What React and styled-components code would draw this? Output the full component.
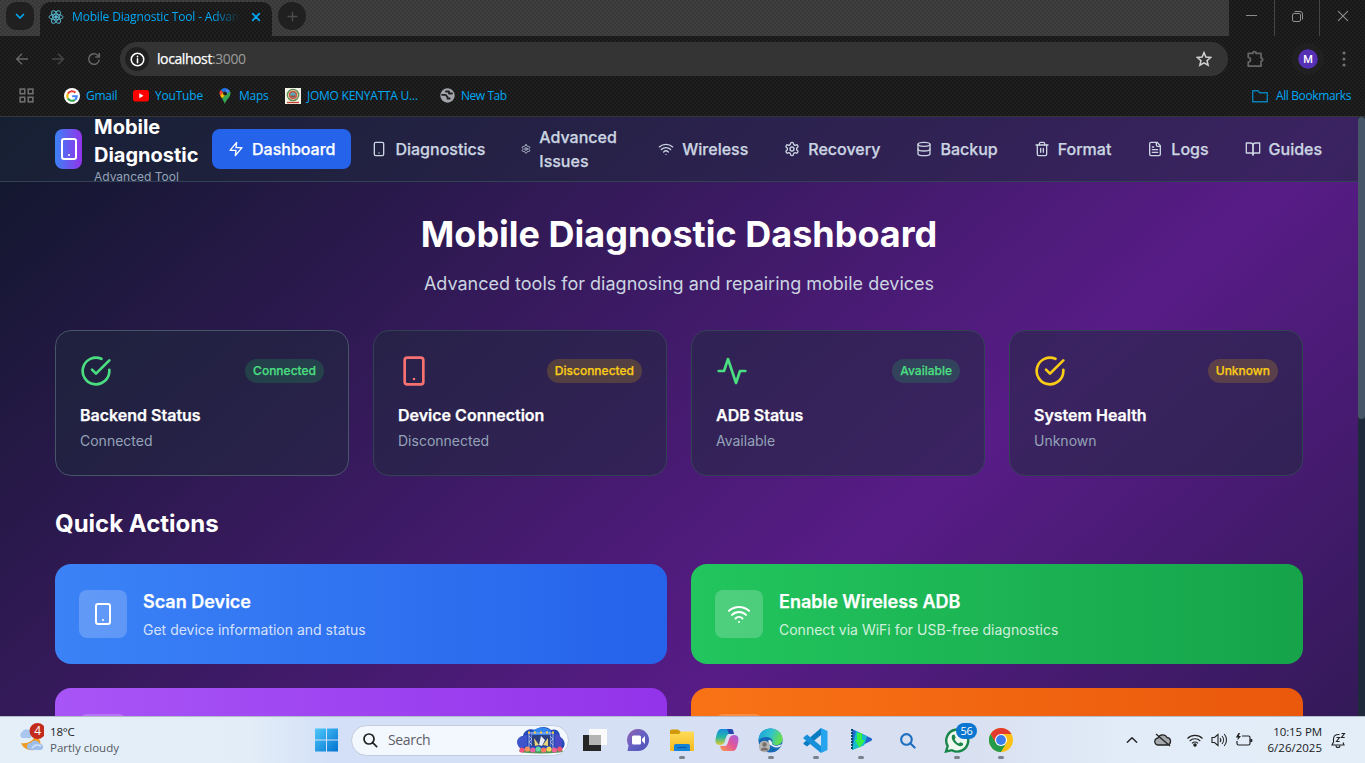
import React from "react";
import styled, { createGlobalStyle, css } from "styled-components";

const GlobalStyle = createGlobalStyle`
  * { box-sizing: border-box; margin: 0; }
  body { margin: 0; overflow: hidden; background: #1f1f1f; }
  svg { display: block; flex-shrink: 0; }
`;

const uiFont = `"Open Sans", "Noto Sans", sans-serif`;
const dots = css`
  background-image: radial-gradient(circle at 1px 1px, ${(p) => p.$dot || "#151515"} 0.6px, transparent 1.1px),
    radial-gradient(circle at 3px 3px, ${(p) => p.$dot || "#151515"} 0.6px, transparent 1.1px);
  background-size: 4px 4px;
`;
const sturdy = css`
  -webkit-text-stroke: 0.25px currentColor;
`;

const Screen = styled.div`
  width: 1365px;
  height: 763px;
  display: flex;
  flex-direction: column;
  overflow: hidden;
  font-family: ${uiFont};
`;

/* ---------- browser chrome ---------- */
const Chrome = styled.div`
  height: 117px;
  flex-shrink: 0;
  background-color: #202020;
  ${dots}
  border-bottom: 1px solid #353535;
  display: flex;
  flex-direction: column;
`;
const TabStrip = styled.div`
  height: 36px;
  display: flex;
`;
const TabArea = styled.div`
  width: 1229px;
  height: 36px;
  display: flex;
  background-color: #404040;
  ${dots}
`;
const TabLead = styled.div`
  width: 40px;
  padding: 2px 0 0 6px;
`;
const TabSearch = styled.div`
  width: 28px;
  height: 28px;
  border-radius: 10px;
  background: #202020;
  display: grid;
  place-items: center;
`;
const Tab = styled.div`
  width: 232px;
  height: 34px;
  margin-top: 2px;
  border-radius: 10px 10px 0 0;
  background-color: #202020;
  ${dots}
  display: flex;
  align-items: center;
  padding: 0 11px 5px 8px;
`;
const TabTitle = styled.div`
  width: 168px;
  margin-left: 8px;
  overflow: hidden;
  white-space: nowrap;
  font-size: 12px;
  letter-spacing: -0.16px;
  color: #00a8f4;
  mask-image: linear-gradient(to right, #000 140px, transparent 168px);
`;
const TabClose = styled.div`
  margin-left: auto;
`;
const NewTab = styled.div`
  width: 28px;
  height: 28px;
  margin: 2px 0 0 6px;
  border-radius: 50%;
  background: #202020;
  display: grid;
  place-items: center;
`;
const WindowButton = styled.div`
  flex: 1;
  display: grid;
  place-items: center;
  padding-bottom: 4px;
  & + & { border-left: 1px solid #454545; }
`;
const Toolbar = styled.div`
  height: 46px;
  display: flex;
  align-items: center;
  padding-left: 14px;
`;
const ToolIcon = styled.div`
  width: ${(p) => p.$w}px;
  display: flex;
  justify-content: ${(p) => p.$align || "flex-start"};
`;
const Omnibox = styled.div`
  width: 1108px;
  height: 34px;
  border-radius: 17px;
  background: #343434;
  display: flex;
  align-items: center;
  padding: 0 16px 0 5px;
  font-size: 14px;
  letter-spacing: -0.41px;
  color: #9c9c9c;
  & b { font-weight: 400; color: #fff; ${sturdy} }
`;
const Address = styled.span`
  padding-bottom: 1px;
`;
const InfoDisc = styled.div`
  width: 24px;
  height: 24px;
  border-radius: 50%;
  background: #202020;
  display: grid;
  place-items: center;
  margin-right: 8px;
`;
const StarSlot = styled.div`
  margin-left: auto;
`;
const Avatar = styled.div`
  width: 20px;
  height: 20px;
  border-radius: 50%;
  background: #5530b5;
  outline: 6px solid #202020;
  color: #fff;
  font: 500 11px/21px Roboto, sans-serif;
  text-align: center;
`;
const Bookmarks = styled.div`
  height: 28px;
  display: flex;
  align-items: center;
  padding: 0 14px 1px 18px;
`;
const Bookmark = styled.div`
  display: flex;
  align-items: center;
  gap: ${(p) => p.$gap || 6}px;
  width: ${(p) => (p.$w ? p.$w + "px" : "auto")};
  margin-left: ${(p) => p.$ml || 0};
  white-space: nowrap;
  font-size: 12px;
  line-height: 16px;
  letter-spacing: ${(p) => p.$track || "-0.25px"};
  color: #00a8f4;
`;

/* ---------- web page ---------- */
const Viewport = styled.div`
  height: 599px;
  flex-shrink: 0;
  display: flex;
  overflow: hidden;
  font-family: Inter, sans-serif;
`;
const Page = styled.div`
  width: 1358px;
  height: 1188px;
  background: linear-gradient(to bottom right, #0f172a, #581c87, #0f172a);
  color: #fff;
`;
const ScrollTrack = styled.div`
  width: 7px;
  height: 599px;
  background: #1e293b;
`;
const ScrollThumb = styled.div`
  height: 302px;
  border-radius: 4px;
  background: #475569;
`;
const NavBar = styled.nav`
  height: 65px;
  overflow: hidden;
  background: rgba(30, 41, 59, 0.5);
  border-bottom: 1px solid #334155;
  padding-left: 55px;
  display: flex;
  align-items: center;
`;
const Brand = styled.div`
  width: 157px;
  display: flex;
  align-items: center;
  gap: 12px;
`;
const BrandMark = styled.div`
  width: 27px;
  height: 40px;
  border-radius: 8px;
  background: linear-gradient(to right, #3b82f6, #9333ea);
  display: grid;
  place-items: center;
`;
const BrandName = styled.div`
  font-size: 20px;
  line-height: 28px;
  font-weight: 700;
  width: 110px;
`;
const BrandSub = styled.div`
  font-size: 12px;
  line-height: 16px;
  color: #94a3b8;
`;
const NavItems = styled.div`
  display: flex;
  align-items: center;
  gap: 4px;
`;
const NavItem = styled.div`
  display: flex;
  align-items: center;
  gap: 8px;
  padding: 8px 16px;
  border-radius: 8px;
  font-size: 16px;
  line-height: 24px;
  font-weight: 500;
  ${sturdy}
  width: ${(p) => (p.$w ? p.$w + "px" : "auto")};
  color: ${(p) => (p.$active ? "#fff" : "#cbd5e1")};
  background: ${(p) => (p.$active ? "#2563eb" : "transparent")};
`;
const Main = styled.main`
  width: 1248px;
  margin: 0 auto;
  padding-top: 32px;
`;
const Title = styled.h1`
  font-size: 36px;
  line-height: 40px;
  font-weight: 700;
  text-align: center;
`;
const Subtitle = styled.p`
  margin-top: 16px;
  font-size: 18px;
  line-height: 28px;
  text-align: center;
  color: #cbd5e1;
`;
const StatusGrid = styled.div`
  display: grid;
  grid-template-columns: repeat(4, 1fr);
  gap: 24px;
  margin-top: 32px;
`;
const StatusCard = styled.div`
  height: 146px;
  border: 1px solid ${(p) => (p.$lit ? "#475569" : "#334155")};
  border-radius: 16px;
  background: rgba(30, 41, 59, 0.5);
  background-clip: padding-box;
  padding: 24px;
`;
const StatusTop = styled.div`
  display: flex;
  align-items: center;
  justify-content: space-between;
  color: ${(p) => p.$color};
`;
const Badge = styled.span`
  padding: 4px 8px;
  border-radius: 12px;
  font-size: 12px;
  line-height: 16px;
  font-weight: 500;
  ${sturdy}
  color: ${(p) => (p.$ok ? "#4ade80" : "#facc15")};
  background: ${(p) => (p.$ok ? "rgba(34,197,94,.2)" : "rgba(234,179,8,.2)")};
`;
const StatusName = styled.h3`
  margin-top: 16px;
  font-size: 16px;
  line-height: 24px;
  font-weight: 600;
  ${sturdy}
`;
const StatusText = styled.p`
  margin-top: 4px;
  font-size: 14px;
  line-height: 20px;
  color: #94a3b8;
`;
const SectionTitle = styled.h2`
  margin-top: 32px;
  font-size: 24px;
  line-height: 32px;
  font-weight: 700;
`;
const ActionGrid = styled.div`
  display: grid;
  grid-template-columns: 1fr 1fr;
  gap: 24px;
  margin-top: 24px;
`;
const ActionCard = styled.div`
  height: 100px;
  border-radius: 16px;
  padding: 24px;
  display: flex;
  align-items: center;
  gap: 16px;
  background: linear-gradient(to right, ${(p) => p.$from}, ${(p) => p.$to});
`;
const ActionIcon = styled.div`
  width: 48px;
  height: 48px;
  border-radius: 8px;
  background: rgba(255, 255, 255, 0.2);
  display: grid;
  place-items: center;
`;
const ActionName = styled.h3`
  font-size: 18px;
  line-height: 28px;
  font-weight: 600;
  ${sturdy}
`;
const ActionText = styled.p`
  margin-top: 4px;
  font-size: 14px;
  line-height: 20px;
  color: rgba(255, 255, 255, 0.8);
`;

/* ---------- taskbar ---------- */
const Taskbar = styled.div`
  height: 47px;
  flex-shrink: 0;
  display: flex;
  align-items: center;
  border-top: 1px solid #b5bccb;
  background: linear-gradient(to right, #e4eff8 0, #e3edf8 250px, #d3e0f7 330px, #d6e0f5 640px, #d8dff0 950px, #e1ecf8 1120px, #e3eef9 100%);
  color: #1b1b1b;
`;
const Weather = styled.div`
  width: 309px;
  padding-left: 18px;
  display: flex;
  align-items: center;
  gap: 6px;
  font-size: 11.5px;
  line-height: 16px;
  letter-spacing: -0.2px;
  & svg { margin-top: -4px; }
  & p:last-child { color: #555b62; letter-spacing: 0; }
`;
const StartSlot = styled.div`
  width: 42px;
  padding-left: 6px;
`;
const SearchBox = styled.div`
  width: 218px;
  height: 31px;
  border-radius: 16px;
  background: #f3f7fe;
  border: 1px solid #c3ccdc;
  display: flex;
  align-items: center;
  justify-content: space-between;
  padding: 0 3px 0 10px;
  color: #5c6067;
  font-size: 14px;
  line-height: 18px;
  letter-spacing: -0.35px;
`;
const SearchLabel = styled.div`
  display: flex;
  align-items: center;
  gap: 10px;
  padding-bottom: 1px;
`;
const AppSlot = styled.div`
  position: relative;
  width: ${(p) => p.$w}px;
  height: 46px;
  display: grid;
  place-items: center;
  padding-bottom: ${(p) => p.$up || 0}px;
  &::after {
    content: "";
    display: ${(p) => (p.$running ? "block" : "none")};
    position: absolute;
    bottom: 4px;
    left: calc(50% - 3px);
    width: 6px;
    height: 3px;
    border-radius: 2px;
    background: #7b818c;
  }
`;
const Apps = styled.div`
  display: flex;
  margin-left: 3px;
`;
const Count = styled.div`
  position: absolute;
  top: 6px;
  right: 7px;
  width: 21px;
  height: 16px;
  border-radius: 8px;
  background: #0a76d0;
  color: #fff;
  font-size: 11px;
  line-height: 16px;
  letter-spacing: -0.3px;
  text-align: center;
`;
const Tray = styled.div`
  margin-left: auto;
  padding-right: 19px;
  display: flex;
  align-items: center;
`;
const TrayIcon = styled.div`
  width: ${(p) => p.$w}px;
  display: flex;
  justify-content: ${(p) => (p.$end ? "flex-end" : "flex-start")};
`;
const Clock = styled.div`
  width: 67px;
  text-align: right;
  font-size: 11.5px;
  line-height: 16px;
  white-space: nowrap;
  & p:first-child { letter-spacing: -0.1px; }
`;

/* ---------- icons ---------- */
const shapes = {
  zap: <polygon points="13 2 3 14 12 14 11 22 21 10 12 10 13 2" />,
  phone: <><rect x="5" y="2" width="14" height="20" rx="2" /><path d="M12 18h.01" /></>,
  gear: <><path d="M12.22 2h-.44a2 2 0 0 0-2 2v.18a2 2 0 0 1-1 1.73l-.43.25a2 2 0 0 1-2 0l-.15-.08a2 2 0 0 0-2.73.73l-.22.38a2 2 0 0 0 .73 2.73l.15.1a2 2 0 0 1 1 1.72v.51a2 2 0 0 1-1 1.74l-.15.09a2 2 0 0 0-.73 2.73l.22.38a2 2 0 0 0 2.73.73l.15-.08a2 2 0 0 1 2 0l.43.25a2 2 0 0 1 1 1.73V20a2 2 0 0 0 2 2h.44a2 2 0 0 0 2-2v-.18a2 2 0 0 1 1-1.73l.43-.25a2 2 0 0 1 2 0l.15.08a2 2 0 0 0 2.73-.73l.22-.39a2 2 0 0 0-.73-2.73l-.15-.08a2 2 0 0 1-1-1.74v-.5a2 2 0 0 1 1-1.74l.15-.09a2 2 0 0 0 .73-2.73l-.22-.38a2 2 0 0 0-2.73-.73l-.15.08a2 2 0 0 1-2 0l-.43-.25a2 2 0 0 1-1-1.73V4a2 2 0 0 0-2-2z" /><circle cx="12" cy="12" r="3" /></>,
  wifi: <><path d="M12 20h.01" /><path d="M2 8.82a15 15 0 0 1 20 0" /><path d="M5 12.859a10 10 0 0 1 14 0" /><path d="M8.5 16.429a5 5 0 0 1 7 0" /></>,
  database: <><ellipse cx="12" cy="5" rx="9" ry="3" /><path d="M3 5V19A9 3 0 0 0 21 19V5" /><path d="M3 12A9 3 0 0 0 21 12" /></>,
  trash: <><path d="M3 6h18" /><path d="M19 6v14c0 1-1 2-2 2H7c-1 0-2-1-2-2V6" /><path d="M8 6V4c0-1 1-2 2-2h4c1 0 2 1 2 2v2" /><path d="M10 11v6M14 11v6" /></>,
  file: <><path d="M15 2H6a2 2 0 0 0-2 2v16a2 2 0 0 0 2 2h12a2 2 0 0 0 2-2V7Z" /><path d="M14 2v4a2 2 0 0 0 2 2h4" /><path d="M10 9H8M16 13H8M16 17H8" /></>,
  book: <><path d="M2 3h6a4 4 0 0 1 4 4v14a3 3 0 0 0-3-3H2z" /><path d="M22 3h-6a4 4 0 0 0-4 4v14a3 3 0 0 1 3-3h7z" /></>,
  check: <><path d="M22 11.08V12a10 10 0 1 1-5.93-9.14" /><path d="m9 11 3 3L22 4" /></>,
  activity: <path d="M22 12h-4l-3 9L9 3l-3 9H2" />,
  back: <path d="M21 12H4M12 4l-8 8 8 8" />,
  forward: <path d="M3 12h17M12 4l8 8-8 8" />,
  reload: <><path d="M20 13a8 8 0 1 1-2.3-6.7L20 8.5" /><path d="M20 3v6h-6" /></>,
  plus: <path d="M12 4v16M4 12h16" />,
  close: <path d="M4 4l16 16M20 4L4 20" />,
  down: <path d="m5 9 7 7 7-7" />,
  up: <path d="m4 16 8-8 8 8" />,
  grid: <><rect x="3" y="3" width="6.5" height="6.5" /><rect x="14.5" y="3" width="6.5" height="6.5" /><rect x="3" y="14.5" width="6.5" height="6.5" /><rect x="14.5" y="14.5" width="6.5" height="6.5" /></>,
  info: <><circle cx="12" cy="12" r="10" /><path d="M12 11v6M12 6.8v.8" /></>,
  star: <path d="m12 2.5 2.8 6.6 7.2.6-5.4 4.7 1.6 7-6.2-3.7-6.2 3.7 1.6-7L2 9.7l7.2-.6z" />,
  puzzle: <path d="M3 4.500h6a2.200 2.200 0 0 1 4.400 0H20v6.200a2.200 2.200 0 0 1 0 4.400V21.500H3v-5.500a3 3 0 0 0 0-6z" />,
  folder: <path d="M1 20.500V4h8l2.500 3H23v13.500z" />,
  search: <><circle cx="10.5" cy="10.5" r="7.5" /><path d="m16 16 6 6" /></>,
};
function Icon({ name, size = 16, stroke = 2, color = "currentColor", join = "round" }) {
  return (
    <svg width={size} height={size} viewBox="0 0 24 24" fill="none" stroke={color} strokeWidth={stroke} strokeLinecap={join === "round" ? "round" : "butt"} strokeLinejoin={join}>
      {shapes[name]}
    </svg>
  );
}

const ReactMark = () => (
  <svg width="16" height="16" viewBox="0 0 24 24" fill="none" stroke="#58b8cf" strokeWidth="1.4">
    <ellipse cx="12" cy="12" rx="10.5" ry="4.2" />
    <ellipse cx="12" cy="12" rx="10.5" ry="4.2" transform="rotate(60 12 12)" />
    <ellipse cx="12" cy="12" rx="10.5" ry="4.2" transform="rotate(120 12 12)" />
    <circle cx="12" cy="12" r="2" fill="#58b8cf" />
  </svg>
);
const GoogleMark = () => (
  <svg width="16" height="16" viewBox="0 0 16 16" fill="none" strokeWidth="2.1">
    <circle cx="8" cy="8" r="8" fill="#fff" />
    <path d="M11.5 4.7A4.8 4.8 0 0 0 3.9 5.6" stroke="#ea4335" />
    <path d="M3.9 5.6a4.800 4.800 0 0 0 0 4.800" stroke="#fbbc05" />
    <path d="M3.9 10.4a4.800 4.800 0 0 0 7 1.400" stroke="#34a853" />
    <path d="M10.9 11.8A4.8 4.8 0 0 0 12.8 8.2H8.2" stroke="#4285f4" />
  </svg>
);
const YouTubeMark = () => (
  <svg width="16" height="12" viewBox="0 0 16 12"><rect width="16" height="11.5" rx="2.8" fill="#f00" /><path d="M6.3 3.3v5L10.5 5.8z" fill="#fff" /></svg>
);
const MapsMark = () => (
  <svg width="12" height="16" viewBox="0 0 12 16">
    <path d="M6 0a5.5 5.500 0 0 0-4.300 2L4.300 4.300 8 .4A6 6 0 0 0 6 0z" fill="#1a73e8" />
    <path d="M1.7 2A5.5 5.5 0 0 0 1.1 7.8L4.3 4.3z" fill="#ea4335" />
    <path d="M8 .4 4.3 4.3 7.8 6.8 11 3.3A5.5 5.5 0 0 0 8 .4z" fill="#4285f4" />
    <path d="M1.1 7.8 3 10.3 7.8 6.8 4.3 4.3z" fill="#fbbc04" />
    <path d="M11 3.3 3 10.3 6 16C6.5 12 11.5 9.5 11.5 5.5Q11.5 4.2 11 3.3z" fill="#34a853" />
    <circle cx="6" cy="5.5" r="2" fill="#202020" />
  </svg>
);
const CrestMark = () => (
  <svg width="16" height="16" viewBox="0 0 16 16">
    <rect width="16" height="16" fill="#f3f3e8" />
    <circle cx="8" cy="7" r="5.7" fill="#d9c9a0" stroke="#5f8c52" strokeWidth="1.3" />
    <circle cx="8" cy="7" r="3.4" fill="#53a9b8" stroke="#d44a3c" strokeWidth="1.3" />
    <path d="M6 7.500h4v1.500H6z" fill="#a64731" /><path d="M2 14.500h12" stroke="#c94334" strokeWidth="1.4" />
  </svg>
);
const GlobeMark = () => (
  <svg width="15" height="15" viewBox="0 0 15 15"><circle cx="7.5" cy="7.5" r="7.2" fill="#a2a6ac" /><path d="M2 6.800h3.500l2 2v1.700h2.200M6 3.500h3v2h3" fill="none" stroke="#202020" strokeWidth="1.8" strokeLinejoin="round" strokeLinecap="round" /></svg>
);
const WeatherMark = () => (
  <svg width="26" height="30" viewBox="0 0 26 30">
    <path d="M3 20c7 1 12-2 14-7 7 2 8 13-1 14-6 1-11-2-13-7z" fill="#f19a25" />
    <path d="M4 15a3.500 3.500 0 0 1 0-6 5 5 0 0 1 9 0v6z" fill="#a9c6ef" />
    <path d="M12 27a3.500 3.500 0 0 1 1-7 5 5 0 0 1 9 1 3 3 0 0 1 0 6z" fill="#9dbdeb" />
    <path d="M14 25c2-3 5-4 9-2" stroke="#d2e3f8" strokeWidth="1.5" fill="none" />
    <circle cx="19.5" cy="8" r="8" fill="#c42b1c" />
    <text x="19.5" y="12.3" fill="#fff" textAnchor="middle" fontFamily="Open Sans" fontSize="12">4</text>
  </svg>
);
const WindowsMark = () => (
  <svg width="24" height="24" viewBox="0 0 24 24">
    <defs><linearGradient id="win" x1="0" y1="0" x2="1" y2="1"><stop stopColor="#4dc8fa" /><stop offset="1" stopColor="#0372d0" /></linearGradient></defs>
    <path d="M0 .5h11v11H0zM12 .5h11v11H12zM0 12.5h11v11H0zM12 12.5h11v11H12z" fill="url(#win)" />
  </svg>
);
const StageArt = () => (
  <svg width="48" height="27" viewBox="0 0 48 27">
    <path d="M4 22C-2 17 0 10 6 9 7 3 13 1 18 3c5-4 12-4 16 0 6-2 9 2 9 7 6 3 6 10 1 13z" fill="#2449b8" />
    <path d="M16 4c6-5 14-4 18 0l-4 8H16z" fill="#3186ef" /><path d="M6 9c-6 1-8 7-3 12l7-2V8z" fill="#3f55cc" />
    <path d="M38 7c6 0 9 7 6 13h-6z" fill="#4a49c5" />
    <path d="M11 6h26M12 5v16M15 5v14M33 5v14M36 5v16M12 9l3 3-3 3 3 3M33 9l3 3-3 3 3 3" stroke="#b3bde1" strokeWidth=".9" fill="none" />
    <path d="M15 8h18v11H15z" fill="#2b407f" />
    <path d="m17 11 5 7-4 1zM31 11l-5 7 5 1z" fill="#ead779" /><path d="m22 18 2-9 4 4-3 6z" fill="#e9edf5" />
    <path d="M11 5.500h2M17 5.500h2M23 5.500h2M29 5.500h2M35 5.500h2" stroke="#ffc843" strokeWidth="2" />
    <ellipse cx="24" cy="24" rx="22" ry="2.6" fill="#4c9651" />
    {["#f3547d", "#ff925c", "#eb5fa3", "#66d6a8", "#ff7663", "#f9d35c", "#f6649a", "#ef5470"].map((c, i) => (
      <circle key={c} cx={5 + i * 5.4} cy={i % 2 ? 22 : 23} r="2.6" fill={c} />
    ))}
  </svg>
);
const TaskViewMark = () => (
  <svg width="24" height="22" viewBox="0 0 24 22"><rect y="6" width="18" height="16" fill="#262626" /><rect x="6" width="18" height="16" fill="#fafafa" /><rect x="6" y="6" width="12" height="10" fill="#b4b4b4" /></svg>
);
const ChatMark = () => (
  <svg width="24" height="24" viewBox="0 0 24 24">
    <defs><linearGradient id="chat" x1="0" y1="0" x2="1" y2="1"><stop stopColor="#9562ae" /><stop offset=".5" stopColor="#6560c4" /><stop offset="1" stopColor="#4b52b4" /></linearGradient></defs>
    <path d="M12 1a11 11 0 1 1 0 22H1.500l1-5.500A11 11 0 0 1 12 1z" fill="url(#chat)" />
    <rect x="6" y="7.5" width="9" height="9" rx="1.5" fill="#fff" /><path d="m16 11 3-3v8l-3-3z" fill="#fff" />
  </svg>
);
const ExplorerMark = () => (
  <svg width="24" height="22" viewBox="0 0 24 22">
    <defs><linearGradient id="fold" x1="0" y1="0" x2="0" y2="1"><stop stopColor="#ffdc58" /><stop offset="1" stopColor="#f5b91c" /></linearGradient></defs>
    <path d="M0 2a1.500 1.500 0 0 1 1.500-1.500H8L11 3v2H0z" fill="#d19a0b" /><path d="M0 5h9l2-2.500h12a1 1 0 0 1 1 1V21a1 1 0 0 1-1 1H1a1 1 0 0 1-1-1z" fill="url(#fold)" />
    <path d="M4 22v-5.500A1.500 1.500 0 0 1 5.500 15h13a1.500 1.500 0 0 1 1.500 1.500V22z" fill="#1584d8" /><path d="M7.500 18.500h9" stroke="#0b5ba7" strokeWidth="1.4" />
  </svg>
);
const CopilotMark = () => (
  <svg width="26" height="24" viewBox="0 0 26 24">
    <defs>
      <linearGradient id="cpA" x1="0" y1="0" x2="0" y2="1"><stop stopColor="#188bdf" /><stop offset=".5" stopColor="#24b7a4" /><stop offset="1" stopColor="#e5c92e" /></linearGradient>
      <linearGradient id="cpB" x1="1" y1="0" x2="0" y2="1"><stop stopColor="#a260df" /><stop offset=".5" stopColor="#e25798" /><stop offset="1" stopColor="#ff9b45" /></linearGradient>
    </defs>
    <path d="M7 1h9c3 0 3 3 4 5h-5c-2 0-3 3-4 7-1 3-3 4-5 4-5 0-5-4-4-8s2-8 5-8z" fill="url(#cpA)" />
    <path d="M19 23h-9c-3 0-3-3-4-5h5c2 0 3-3 4-7 1-3 3-4 5-4 5 0 5 4 4 8s-2 8-5 8z" fill="url(#cpB)" />
    <path d="M13 1h4c3 0 2 3 3 5h-5z" fill="#2446b1" />
  </svg>
);
const EdgeMark = () => (
  <svg width="25" height="25" viewBox="0 0 25 25">
    <defs><linearGradient id="edge" x1="0" y1="0" x2="1" y2=".3"><stop stopColor="#199cda" /><stop offset=".55" stopColor="#30c2ce" /><stop offset="1" stopColor="#63dc55" /></linearGradient></defs>
    <circle cx="12.5" cy="12.5" r="12" fill="#1468b4" />
    <path d="M.5 12C1 4 6 .5 12.5.5S24.5 5 24.5 11c0 4-3 6-6 6-3 0-5-1-4-3 1-5-9-7-14-2z" fill="url(#edge)" />
    <path d="M10.500 12c3 0 3.500 2 3.500 3 0 3 5 4 10 1l-1 2c-3 2-6 2-9 0-3-1-4-3-3.500-6z" fill="#e6edf7" />
    <circle cx="6.5" cy="18.5" r="5.7" fill="#b6b4b0" /><circle cx="6.5" cy="16.5" r="2.2" fill="#766f6b" /><path d="M2.500 22.500c1-4 7-4 8 0z" fill="#766f6b" />
  </svg>
);
const CodeMark = () => (
  <svg width="25" height="25" viewBox="0 0 25 25"><path d="M.5 15 18 0v7L4 18.500.5 16z" fill="#087bc1" /><path d="M.5 9.500 4 6.500 18 18v7L.5 10.500z" fill="#168fd8" /><path d="M18 0 24.500 3v19L18 25z" fill="#26a4ed" /></svg>
);
const PlayMark = () => (
  <svg width="21" height="22" viewBox="0 0 21 22"><path d="M1 0 20 9c1.500 1 1.500 2 0 3L1 21z" fill="#2368ce" /><path d="M5 2 16 7.500l-3 9L1 21z" fill="#14bfc9" /><path d="M1 0v21" stroke="#064b68" strokeWidth="2" strokeDasharray="2 1" /><path d="M6 4h5v7h3l-5.500 8L4 11h2z" fill="#39ec47" /></svg>
);
const WhatsAppMark = () => (
  <svg width="26" height="25" viewBox="0 0 26 25"><path d="M2 23.500 3.700 18A11 11 0 1 1 8 22.200z" fill="#eef8ef" stroke="#18864b" strokeWidth="2.4" /><path d="M8 7.500c2-2 3-1 3.500 2 .2 1-1 1.500-.8 2 1 2 2.300 3.200 4 4 1 0 1-1.500 2-1.200 3 1 3 2 1.500 3.500C15 20 6 13 8 7.500z" fill="#18864b" /></svg>
);
const ChromeMark = () => (
  <svg width="24" height="24" viewBox="0 0 24 24"><circle cx="12" cy="12" r="12" fill="#fbc116" /><path d="M1.600 6A12 12 0 0 1 22.400 6H12l-5.200 9z" fill="#e33b2e" /><path d="M1.600 6A12 12 0 0 0 12 24l5.200-9H6.800z" fill="#229c4b" /><circle cx="12" cy="12" r="6" fill="#fff" /><circle cx="12" cy="12" r="4.9" fill="#3b7ded" /></svg>
);
const MinimizeMark = () => (
  <svg width="11" height="2" viewBox="0 0 11 2"><rect width="11" height="1" fill="#8a8a8a" /></svg>
);
const RestoreMark = () => (
  <svg width="11" height="11" viewBox="0 0 11 11" fill="none" stroke="#8f8f8f"><rect x=".5" y="2.5" width="8" height="8" rx="1.5" /><path d="M2.500.5H8A2.500 2.500 0 0 1 10.500 3v5.500" /></svg>
);
const CloudOffMark = () => (
  <svg width="18" height="14" viewBox="0 0 18 14"><path d="M4.500 12a3.500 3.500 0 0 1-.5-7 5 5 0 0 1 9-.5 3.800 3.800 0 0 1 .5 7.500z" fill="#a5a8ac" stroke="#222" strokeWidth="1.3" /><path d="m2 1 14 12" stroke="#222" strokeWidth="1.3" /></svg>
);
const TrayWifi = () => (
  <svg width="16" height="13" viewBox="0 0 16 13" fill="none" stroke="#222" strokeWidth="1.1"><path d="M.5 4.500a10.500 10.500 0 0 1 15 0M2.700 7a7.400 7.400 0 0 1 10.600 0M5 9.300a4.200 4.200 0 0 1 6 0" /><circle cx="8" cy="11" r="1.2" fill="#222" /></svg>
);
const Speaker = () => (
  <svg width="17" height="14" viewBox="0 0 17 14" fill="none" stroke="#222" strokeWidth="1.1"><path d="M1 4.500h2.500L7 1.500v11L3.500 9.500H1z" /><path d="M9 5a3 3 0 0 1 0 4M11 3a6 6 0 0 1 0 8M13.200 1a9 9 0 0 1 0 12" /></svg>
);
const Battery = () => (
  <svg width="18" height="15" viewBox="0 0 18 15" fill="none" stroke="#222" strokeWidth="1.2"><path d="M7 3h6.500A1.500 1.500 0 0 1 15 4.500v6a1.500 1.500 0 0 1-1.500 1.500h-10A1.500 1.500 0 0 1 2 10.500V8" /><path d="M16.300 6v3" strokeWidth="2" /><path d="M3.500 0 .8 4.500H3L2.400 7.500 6 3H3.800L5 0z" fill="#222" stroke="none" /></svg>
);
const BellSnooze = () => (
  <svg width="15" height="17" viewBox="0 0 15 17" fill="none" stroke="#222" strokeWidth="1.1"><path d="M8.500 2.500C4 2 2.500 4.500 2.500 7v3L1 13h12l-1-2.500" /><path d="M5 13.500a2 2 0 0 0 4 0M5.500 5.500h3L5.500 9.500h3.200M10.500 1.500h3l-3 4h3.200" /></svg>
);

const navItems = [
  ["zap", "Dashboard"],
  ["phone", "Diagnostics"],
  ["gear", "Advanced Issues", 133],
  ["wifi", "Wireless"],
  ["gear", "Recovery"],
  ["database", "Backup"],
  ["trash", "Format"],
  ["file", "Logs"],
  ["book", "Guides"],
];
const statuses = [
  { icon: "check", color: "#4ade80", name: "Backend Status", value: "Connected", ok: true },
  { icon: "phone", color: "#f87171", name: "Device Connection", value: "Disconnected" },
  { icon: "activity", color: "#4ade80", name: "ADB Status", value: "Available", ok: true },
  { icon: "check", color: "#facc15", name: "System Health", value: "Unknown" },
];
const actions = [
  { icon: "phone", name: "Scan Device", text: "Get device information and status", from: "#3b82f6", to: "#2563eb" },
  { icon: "wifi", name: "Enable Wireless ADB", text: "Connect via WiFi for USB-free diagnostics", from: "#22c55e", to: "#16a34a" },
  { from: "#a855f7", to: "#9333ea" },
  { from: "#f97316", to: "#ea580c" },
];

function BrowserChrome() {
  return (
    <Chrome>
      <TabStrip>
        <TabArea $dot="#353535">
          <TabLead><TabSearch><Icon name="down" size={12} stroke={3.4} color="#00a8f4" /></TabSearch></TabLead>
          <Tab>
            <ReactMark />
            <TabTitle>Mobile Diagnostic Tool - Advanced</TabTitle>
            <TabClose><Icon name="close" size={10} stroke={4} color="#00a8f4" /></TabClose>
          </Tab>
          <NewTab><Icon name="plus" size={13} stroke={2.6} color="#4c4c4c" /></NewTab>
        </TabArea>
        <WindowButton><MinimizeMark /></WindowButton>
        <WindowButton><RestoreMark /></WindowButton>
        <WindowButton><Icon name="close" size={14} stroke={1.8} color="#8f8f8f" /></WindowButton>
      </TabStrip>
      <Toolbar>
        <ToolIcon $w={36}><Icon name="back" size={16} color="#666" join="miter" stroke={2.2} /></ToolIcon>
        <ToolIcon $w={36}><Icon name="forward" size={16} color="#454545" join="miter" stroke={2.2} /></ToolIcon>
        <ToolIcon $w={34}><Icon name="reload" size={16} color="#666" join="miter" stroke={2.2} /></ToolIcon>
        <Omnibox>
          <InfoDisc><Icon name="info" size={15} color="#fff" stroke={2.5} /></InfoDisc>
          <Address><b>localhost</b>:3000</Address>
          <StarSlot><Icon name="star" size={16} color="#d0d0d0" stroke={2.3} join="miter" /></StarSlot>
        </Omnibox>
        <ToolIcon $w={54} $align="center"><Icon name="puzzle" size={18} color="#666" stroke={2.3} /></ToolIcon>
        <ToolIcon $w={52} $align="center"><Avatar>M</Avatar></ToolIcon>
        <ToolIcon $w={20} $align="center">
          <svg width="4" height="16" fill="#707070"><circle cx="2" cy="2" r="1.6" /><circle cx="2" cy="8" r="1.6" /><circle cx="2" cy="14" r="1.6" /></svg>
        </ToolIcon>
      </Toolbar>
      <Bookmarks>
        <Bookmark $w={46}><Icon name="grid" size={17} color="#6f6f6f" stroke={2.2} join="miter" /></Bookmark>
        <Bookmark $w={69}><GoogleMark />Gmail</Bookmark>
        <Bookmark $w={86} $track="-0.2px"><YouTubeMark />YouTube</Bookmark>
        <Bookmark $w={66} $gap={8}><MapsMark />Maps</Bookmark>
        <Bookmark $w={155}><CrestMark />JOMO KENYATTA U...</Bookmark>
        <Bookmark $track="-0.45px"><GlobeMark />New Tab</Bookmark>
        <Bookmark $ml="auto" $gap={8} $track="-0.38px"><Icon name="folder" size={16} color="#0a7fb5" join="miter" stroke={2.2} />All Bookmarks</Bookmark>
      </Bookmarks>
    </Chrome>
  );
}

function Dashboard() {
  return (
    <Viewport>
      <Page>
        <NavBar>
          <Brand>
            <BrandMark><Icon name="phone" size={24} /></BrandMark>
            <div>
              <BrandName>Mobile Diagnostic</BrandName>
              <BrandSub>Advanced Tool</BrandSub>
            </div>
          </Brand>
          <NavItems>
            {navItems.map(([icon, label, w], i) => (
              <NavItem key={label} $active={i === 0} $w={w}>
                <Icon name={icon} size={w ? 10 : 16} />
                {label}
              </NavItem>
            ))}
          </NavItems>
        </NavBar>
        <Main>
          <Title>Mobile Diagnostic Dashboard</Title>
          <Subtitle>Advanced tools for diagnosing and repairing mobile devices</Subtitle>
          <StatusGrid>
            {statuses.map((s, i) => (
              <StatusCard key={s.name} $lit={i === 0}>
                <StatusTop $color={s.color}>
                  <Icon name={s.icon} size={32} />
                  <Badge $ok={s.ok}>{s.value}</Badge>
                </StatusTop>
                <StatusName>{s.name}</StatusName>
                <StatusText>{s.value}</StatusText>
              </StatusCard>
            ))}
          </StatusGrid>
          <SectionTitle>Quick Actions</SectionTitle>
          <ActionGrid>
            {actions.map((a) => (
              <ActionCard key={a.from} $from={a.from} $to={a.to}>
                <ActionIcon>{a.icon && <Icon name={a.icon} size={24} />}</ActionIcon>
                {a.name && <div><ActionName>{a.name}</ActionName><ActionText>{a.text}</ActionText></div>}
              </ActionCard>
            ))}
          </ActionGrid>
        </Main>
      </Page>
      <ScrollTrack><ScrollThumb /></ScrollTrack>
    </Viewport>
  );
}

function SystemTaskbar() {
  return (
    <Taskbar>
      <Weather><WeatherMark /><div><p>18°C</p><p>Partly cloudy</p></div></Weather>
      <StartSlot><WindowsMark /></StartSlot>
      <SearchBox>
        <SearchLabel><Icon name="search" size={16} stroke={2.6} color="#222" />Search</SearchLabel>
        <StageArt />
      </SearchBox>
      <Apps>
        <AppSlot $w={45}><TaskViewMark /></AppSlot>
        <AppSlot $w={42}><ChatMark /></AppSlot>
        <AppSlot $w={46} $running><ExplorerMark /></AppSlot>
        <AppSlot $w={43} $up={1}><CopilotMark /></AppSlot>
        <AppSlot $w={45} $running><EdgeMark /></AppSlot>
        <AppSlot $w={45} $running><CodeMark /></AppSlot>
        <AppSlot $w={46} $running><PlayMark /></AppSlot>
        <AppSlot $w={46}><Icon name="search" size={17} stroke={3} color="#1e6fc0" /></AppSlot>
        <AppSlot $w={54} $running><WhatsAppMark /><Count>56</Count></AppSlot>
        <AppSlot $w={33} $running><ChromeMark /></AppSlot>
      </Apps>
      <Tray>
        <TrayIcon $w={29}><Icon name="up" size={14} stroke={2.4} color="#222" /></TrayIcon>
        <TrayIcon $w={33}><CloudOffMark /></TrayIcon>
        <TrayIcon $w={24}><TrayWifi /></TrayIcon>
        <TrayIcon $w={24}><Speaker /></TrayIcon>
        <TrayIcon $w={20}><Battery /></TrayIcon>
        <Clock><p>10:15 PM</p><p>6/26/2025</p></Clock>
        <TrayIcon $w={24} $end><BellSnooze /></TrayIcon>
      </Tray>
    </Taskbar>
  );
}

export default function App() {
  return (
    <>
      <GlobalStyle />
      <Screen>
        <BrowserChrome />
        <Dashboard />
        <SystemTaskbar />
      </Screen>
    </>
  );
}
